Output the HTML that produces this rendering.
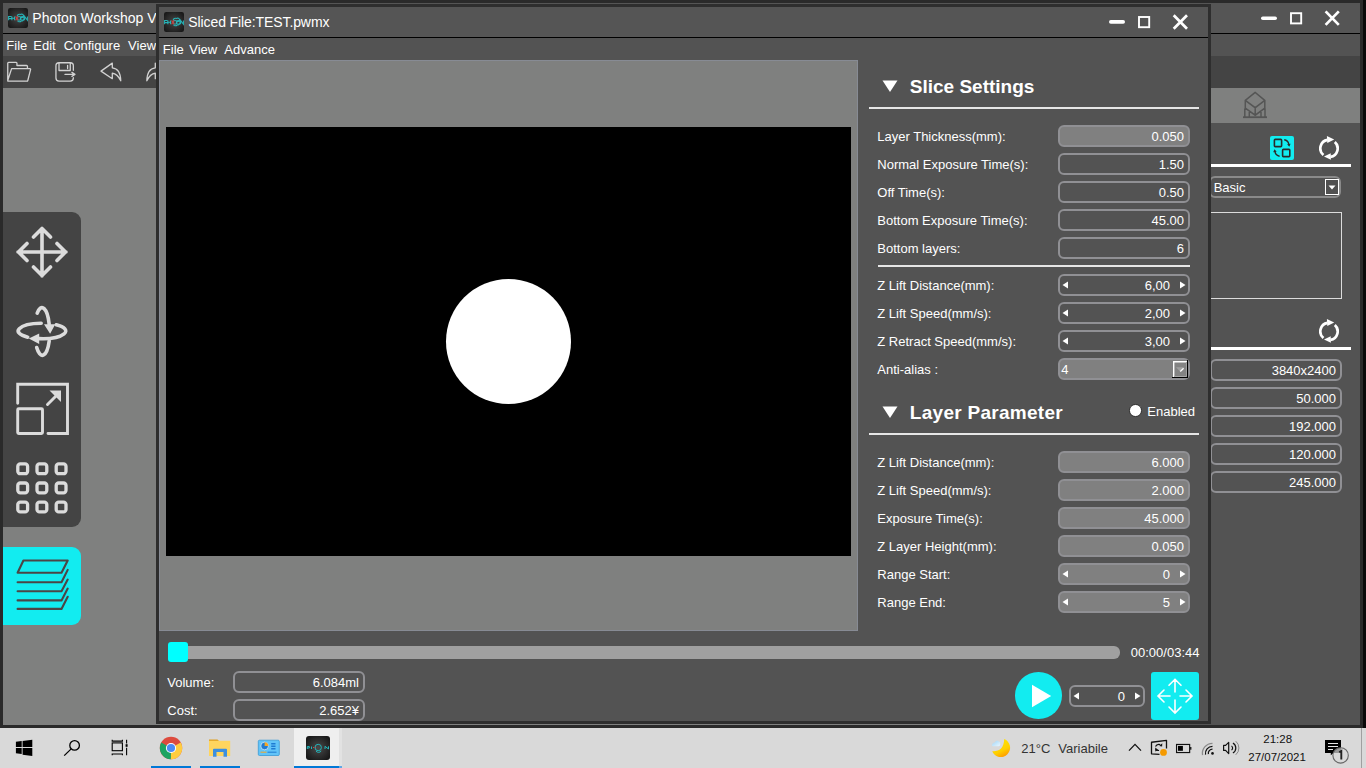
<!DOCTYPE html>
<html><head><meta charset="utf-8"><title>Photon Workshop</title>
<style>
html,body{margin:0;padding:0}
body{width:1366px;height:768px;overflow:hidden;position:relative;background:#2a2a2a;font-family:"Liberation Sans",sans-serif}
.a{position:absolute;display:block}
.t{position:absolute;white-space:pre;font-family:"Liberation Sans",sans-serif}
</style></head><body>
<div class="a" style="left:1363px;top:0px;width:3px;height:728px;background:#0a0a0a;"></div>
<div class="a" style="left:3px;top:3px;width:1357px;height:30px;background:#555555;"></div>
<div class="a" style="left:3px;top:33px;width:1357px;height:1px;background:#000;"></div>
<div class="a" style="left:3px;top:34px;width:1357px;height:22px;background:#535353;"></div>
<div class="a" style="left:3px;top:56px;width:1357px;height:32px;background:#444444;"></div>
<div class="a" style="left:3px;top:88px;width:1357px;height:637px;background:#7f807f;"></div>
<div class="a" style="left:1180px;top:123px;width:180px;height:602px;background:#535353;"></div>
<svg class="a" style="left:8px;top:8px;" width="20" height="20" viewBox="0 0 20 20"><defs><radialGradient id="lg8" cx="50%" cy="50%" r="62%"><stop offset="0" stop-color="#464646"/><stop offset="1" stop-color="#181818"/></radialGradient></defs>
<rect x="0" y="0" width="20" height="20" rx="2.2" fill="url(#lg8)"/>
<g fill="none" stroke="#27b4b8" stroke-width="1.05">
<path d="M0.6 12.2V8.4H2.8A1.1 1.1 0 0 1 2.8 10.6H0.6M3.9 8.4V12.2M6.6 8.4V12.2M3.9 10.3H6.6M16.6 12.2V8.4L19.4 12.2V8.4"/>
<circle cx="11" cy="10.3" r="1.9"/><path d="M9.2 8.2C9.3 6.4 11.3 5.9 12.6 6.4 13.6 5.8 15.4 6.1 15.6 7.8 15.5 9.2 14 9.8 12.8 9.2M9.6 12.6C10.2 14.2 12.3 14.2 13.2 12.9 14.1 13.4 15.3 12.8 15.4 11.6"/>
<circle cx="14.3" cy="10.4" r="1.8"/>
</g>
<path d="M7.6 8.4L10 12.2M10 8.4L7.6 12.2" stroke="#c8403f" stroke-width="1.1"/></svg>
<div class="t" style="left:32.3px;top:10px;line-height:16px;font-size:14px;font-weight:normal;color:#fff;">Photon Workshop V2.1.24</div>
<div class="t" style="left:6.3px;top:38px;line-height:15px;font-size:13px;font-weight:normal;color:#fff;">File</div>
<div class="t" style="left:33.3px;top:38px;line-height:15px;font-size:13px;font-weight:normal;color:#fff;">Edit</div>
<div class="t" style="left:63.8px;top:38px;line-height:15px;font-size:13px;font-weight:normal;color:#fff;">Configure</div>
<div class="t" style="left:128.10000000000002px;top:38px;line-height:15px;font-size:13px;font-weight:normal;color:#fff;">View</div>
<svg class="a" style="left:4px;top:60px;" width="30" height="26" viewBox="0 0 30 26"><path fill="none" stroke="#d2d2d2" stroke-width="1.3" stroke-linejoin="round" stroke-linecap="round" d="M3.75 21V3.3c0-.5.4-.9.9-.9h7.5c.5 0 .8.4.8.9v2.2h9.6c.5 0 .9.4.9.9v1.6M7.6 8.6h18.3c.5 0 .8.4.7.8l-2.8 11.1c-.1.4-.5.7-.9.7H4.6c-.5 0-.9-.4-.8-.9z"/></svg>
<svg class="a" style="left:52px;top:60px;" width="28" height="26" viewBox="0 0 28 26"><path fill="none" stroke="#d2d2d2" stroke-width="1.3" stroke-linejoin="round" stroke-linecap="round" d="M21.35 10.3V5.75c0-1.65-1.35-3-3-3H6.95c-1.65 0-3 1.35-3 3v12.3c0 1.65 1.35 3 3 3h11.4c1.65 0 3-1.35 3-3v-.3M7 2.75v7.75h11.25V2.75M15.6 5.3v3.3M13 14.4h9.9M19.9 12.4l3 2-3 2"/></svg>
<svg class="a" style="left:98px;top:60px;" width="26" height="26" viewBox="0 0 26 26"><path fill="none" stroke="#d2d2d2" stroke-width="1.3" stroke-linejoin="round" stroke-linecap="round" d="M3 11.15L14.3 3.15V7.8c5.2.5 8.3 5.5 8.45 13-2-4.3-4.6-7.2-8.45-7.55V18.7z"/></svg>
<svg class="a" style="left:144px;top:60px;" width="12" height="26" viewBox="0 0 12 26"><path fill="none" stroke="#d2d2d2" stroke-width="1.3" stroke-linejoin="round" stroke-linecap="round" d="M11.3 3.2V7.8c-5.2.5-8.3 5.5-8.45 13 2-4.3 4.6-7.2 8.45-7.55V18.7"/></svg>
<svg class="a" style="left:1240px;top:89px;" width="30" height="32" viewBox="0 0 30 32"><g fill="none" stroke="#555" stroke-width="1.5"><path d="M15.2 3.4L5.3 11.4V19.1L15.2 26.2 24.8 19.1V11.4ZM5.3 11.4L15.2 18.7 24.8 11.4M15.2 18.7V26.2M4.8 19.6V28.2M9.3 22.9V28.2M21 22.9V28.2M25 19.6V28.2"/><path d="M3 28.2H27" stroke-width="1.8"/></g></svg>
<div class="a" style="left:1270px;top:136px;width:24px;height:24px;background:#12ecf0;border-radius:2px"></div>
<svg class="a" style="left:1270px;top:136px;" width="24" height="24" viewBox="0 0 24 24"><g fill="none" stroke="#2a2a2a"><rect x="4.4" y="3.4" width="7.2" height="7.2" rx="0.8" stroke-width="1.6"/><rect x="12.6" y="13.4" width="7.2" height="7.2" rx="0.8" stroke-width="1.6"/><path d="M14.2 3.8c2.4.3 4.1 2 4.6 4.3M9.6 20.2c-2.4-.3-4.1-2-4.6-4.3" stroke-width="1.4"/></g><path d="M17.1 8.3L19.3 10.8 20.6 7.8Z M6.7 15.7L4.5 13.2 3.2 16.2Z" fill="#2a2a2a"/></svg>
<svg class="a" style="left:1319px;top:136px;" width="20" height="24" viewBox="0 0 20 24"><g fill="none" stroke="#fff" stroke-width="2.7"><path d="M8.5 3.88A8.65 8.65 0 0 0 4.44 19.03"/><path d="M15.79 5.97A8.65 8.65 0 0 1 11.5 20.92"/></g><path d="M7.9 0L15.2 3.5 8.3 7Z M11.7 17.25L5 20.4 11.9 23.7Z" fill="#fff"/></svg>
<div class="a" style="left:1211px;top:164px;width:140px;height:3px;background:#fff;"></div>
<div class="a" style="left:1209px;top:176px;width:128px;height:18px;border:2px solid #8a8a8a;border-radius:6px;background:#525252"></div>
<div class="a" style="left:1325px;top:179px;width:14px;height:16px;background:#505050;border:1px solid #fff;box-sizing:border-box"></div>
<svg class="a" style="left:1325px;top:179px;" width="14" height="16" viewBox="0 0 14 16"><path d="M3.5 6.5h7L7 10.5z" fill="#fff"/></svg>
<div class="t" style="left:1213.7px;top:180px;line-height:15px;font-size:13px;font-weight:normal;color:#fff;">Basic</div>
<div class="a" style="left:1200px;top:212px;width:141px;height:85px;border:1px solid #dcdcdc;border-left:none"></div>
<svg class="a" style="left:1319px;top:319px;" width="20" height="24" viewBox="0 0 20 24"><g fill="none" stroke="#fff" stroke-width="2.7"><path d="M8.5 3.88A8.65 8.65 0 0 0 4.44 19.03"/><path d="M15.79 5.97A8.65 8.65 0 0 1 11.5 20.92"/></g><path d="M7.9 0L15.2 3.5 8.3 7Z M11.7 17.25L5 20.4 11.9 23.7Z" fill="#fff"/></svg>
<div class="a" style="left:1211px;top:347px;width:140px;height:3px;background:#fff;"></div>
<div class="a" style="left:1210px;top:359px;width:128px;height:18px;border:2px solid #909094;border-radius:6px;background:transparent"></div>
<div class="t" style="left:1036px;width:300px;text-align:right;top:363px;line-height:15px;font-size:13px;font-weight:normal;color:#fff;">3840x2400</div>
<div class="a" style="left:1210px;top:387px;width:128px;height:18px;border:2px solid #909094;border-radius:6px;background:transparent"></div>
<div class="t" style="left:1036px;width:300px;text-align:right;top:391px;line-height:15px;font-size:13px;font-weight:normal;color:#fff;">50.000</div>
<div class="a" style="left:1210px;top:415px;width:128px;height:18px;border:2px solid #909094;border-radius:6px;background:transparent"></div>
<div class="t" style="left:1036px;width:300px;text-align:right;top:419px;line-height:15px;font-size:13px;font-weight:normal;color:#fff;">192.000</div>
<div class="a" style="left:1210px;top:443px;width:128px;height:18px;border:2px solid #909094;border-radius:6px;background:transparent"></div>
<div class="t" style="left:1036px;width:300px;text-align:right;top:447px;line-height:15px;font-size:13px;font-weight:normal;color:#fff;">120.000</div>
<div class="a" style="left:1210px;top:471px;width:128px;height:18px;border:2px solid #909094;border-radius:6px;background:transparent"></div>
<div class="t" style="left:1036px;width:300px;text-align:right;top:475px;line-height:15px;font-size:13px;font-weight:normal;color:#fff;">245.000</div>
<div class="a" style="left:3px;top:212px;width:78px;height:315px;background:#444444;border-radius:0 9px 9px 0"></div>
<svg class="a" style="left:10px;top:220px;" width="64" height="64" viewBox="0 0 64 64"><path fill="none" stroke="#dcdcdc" stroke-width="3.6" stroke-linecap="round" stroke-linejoin="round" d="M32 8.5V56M8 32H56M23.5 17L32 8.5 40.5 17M23.5 47L32 55.5 40.5 47M17 23.5L8.5 32 17 40.5M47 23.5L55.5 32 47 40.5"/></svg>
<svg class="a" style="left:10px;top:299px;" width="64" height="64" viewBox="0 0 64 64"><g fill="none" stroke="#dcdcdc" stroke-width="3.6" stroke-linecap="round"><path d="M31.17 24.3A23.8 7.7 0 0 0 17.7 38.15"/><path d="M46.3 25.85A23.8 7.7 0 0 1 29.1 39.64"/><path d="M27.2 14.07A7.5 23.4 0 0 1 39.17 25.16"/><path d="M39.2 41.9A7.5 23.4 0 0 1 26.7 48.5"/></g><path d="M34 25.3L45.3 25.3 40.1 34.8Z M29.2 34.4L29.2 45 18.8 39.4Z" fill="#dcdcdc"/></svg>
<svg class="a" style="left:10px;top:377px;" width="64" height="64" viewBox="0 0 64 64"><g fill="none" stroke="#dcdcdc" stroke-width="2.9" stroke-linecap="round"><path d="M7.7 26.3V7.3H57.5V56.5H38"/><rect x="7.7" y="31.7" width="24.8" height="24.8" rx="1"/><path d="M37.5 27.5L49 16"/></g><path d="M39.5 13.5H51V25Z" fill="#dcdcdc"/></svg>
<svg class="a" style="left:10px;top:456px;" width="64" height="64" viewBox="0 0 64 64"><g fill="none" stroke="#dcdcdc" stroke-width="3.3"><rect x="7.8" y="7.9" width="9.8" height="9.8" rx="2.5"/><rect x="27.0" y="7.9" width="9.8" height="9.8" rx="2.5"/><rect x="46.199999999999996" y="7.9" width="9.8" height="9.8" rx="2.5"/><rect x="7.8" y="27.0" width="9.8" height="9.8" rx="2.5"/><rect x="27.0" y="27.0" width="9.8" height="9.8" rx="2.5"/><rect x="46.199999999999996" y="27.0" width="9.8" height="9.8" rx="2.5"/><rect x="7.8" y="46.1" width="9.8" height="9.8" rx="2.5"/><rect x="27.0" y="46.1" width="9.8" height="9.8" rx="2.5"/><rect x="46.199999999999996" y="46.1" width="9.8" height="9.8" rx="2.5"/></g></svg>
<div class="a" style="left:3px;top:547px;width:78px;height:78px;background:#12ecf0;border-radius:0 9px 9px 0"></div>
<svg class="a" style="left:3px;top:547px;" width="78" height="78" viewBox="0 0 78 78"><g fill="none" stroke="#4b4646" stroke-width="2.1" stroke-linecap="round" stroke-linejoin="round"><path d="M14.6 25.8L20.4 13.5H64.7L58.5 25.8Z"/><path d="M14.6 35.2H58.5L64.7 22.9M14.6 44.2H58.5L64.7 32.6M14.6 53.4H58.5L64.7 41.6M14.6 61.9H58.5L64.7 49.8"/></g></svg>
<div class="a" style="left:156px;top:4px;width:1055px;height:720px;background:#2e2e2e;"></div>
<div class="a" style="left:159px;top:7px;width:1049px;height:30px;background:#555555;"></div>
<div class="a" style="left:159px;top:37px;width:1049px;height:1px;background:#000;"></div>
<div class="a" style="left:159px;top:38px;width:1049px;height:683px;background:#535353;"></div>
<div class="a" style="left:159px;top:60px;width:699px;height:571px;background:#878b94;"></div>
<div class="a" style="left:160px;top:61px;width:697px;height:569px;background:#7f807f;"></div>
<div class="a" style="left:166px;top:127px;width:685px;height:429px;background:#000;"></div>
<div class="a" style="left:446px;top:278.75px;width:125px;height:125px;border-radius:50%;background:#fff"></div>
<svg class="a" style="left:164px;top:12px;" width="20" height="20" viewBox="0 0 20 20"><defs><radialGradient id="lg164" cx="50%" cy="50%" r="62%"><stop offset="0" stop-color="#464646"/><stop offset="1" stop-color="#181818"/></radialGradient></defs>
<rect x="0" y="0" width="20" height="20" rx="2.2" fill="url(#lg164)"/>
<g fill="none" stroke="#27b4b8" stroke-width="1.05">
<path d="M0.6 12.2V8.4H2.8A1.1 1.1 0 0 1 2.8 10.6H0.6M3.9 8.4V12.2M6.6 8.4V12.2M3.9 10.3H6.6M16.6 12.2V8.4L19.4 12.2V8.4"/>
<circle cx="11" cy="10.3" r="1.9"/><path d="M9.2 8.2C9.3 6.4 11.3 5.9 12.6 6.4 13.6 5.8 15.4 6.1 15.6 7.8 15.5 9.2 14 9.8 12.8 9.2M9.6 12.6C10.2 14.2 12.3 14.2 13.2 12.9 14.1 13.4 15.3 12.8 15.4 11.6"/>
<circle cx="14.3" cy="10.4" r="1.8"/>
</g>
<path d="M7.6 8.4L10 12.2M10 8.4L7.6 12.2" stroke="#c8403f" stroke-width="1.1"/></svg>
<div class="t" style="left:188.3px;top:14px;line-height:16px;font-size:14px;font-weight:normal;color:#fff;letter-spacing:-0.1px">Sliced File:TEST.pwmx</div>
<div class="t" style="left:162.8px;top:42px;line-height:15px;font-size:13px;font-weight:normal;color:#fff;">File</div>
<div class="t" style="left:189.3px;top:42px;line-height:15px;font-size:13px;font-weight:normal;color:#fff;">View</div>
<div class="t" style="left:224.3px;top:42px;line-height:15px;font-size:13px;font-weight:normal;color:#fff;">Advance</div>
<svg class="a" style="left:1105px;top:10px;" width="90" height="24" viewBox="0 0 90 24"><path d="M5.8 11.9H18.2" stroke="#fff" stroke-width="3.6" stroke-linecap="round"/><rect x="34" y="7" width="10.2" height="10.2" fill="none" stroke="#fff" stroke-width="1.9"/><path d="M68.7 5.2L82 18.8M82 5.2L68.7 18.8" stroke="#fff" stroke-width="2.7"/></svg>
<svg class="a" style="left:1257px;top:6px;" width="90" height="24" viewBox="0 0 90 24"><path d="M5.8 12.3H18.2" stroke="#fff" stroke-width="3.6" stroke-linecap="round"/><rect x="34" y="7.2" width="10.2" height="10.2" fill="none" stroke="#fff" stroke-width="1.9"/><path d="M68.6 5.4L81.8 18.9M81.8 5.4L68.6 18.9" stroke="#fff" stroke-width="2.7"/></svg>
<svg class="a" style="left:882px;top:80px;" width="16" height="12" viewBox="0 0 16 12"><path d="M0.5 0.5H15.5L8 12Z" fill="#fff"/></svg>
<div class="t" style="left:909.8px;top:76px;line-height:21px;font-size:19px;font-weight:bold;color:#fff;">Slice Settings</div>
<div class="a" style="left:869px;top:107px;width:330px;height:2px;background:#e6e6e6;"></div>
<div class="t" style="left:877.3px;top:129px;line-height:15px;font-size:13px;font-weight:normal;color:#fff;">Layer Thickness(mm):</div>
<div class="a" style="left:1058px;top:125px;width:128px;height:18px;border:2px solid #909094;border-radius:6px;background:#808080"></div>
<div class="t" style="left:884px;width:300px;text-align:right;top:129px;line-height:15px;font-size:13px;font-weight:normal;color:#fff;">0.050</div>
<div class="t" style="left:877.3px;top:157px;line-height:15px;font-size:13px;font-weight:normal;color:#fff;">Normal Exposure Time(s):</div>
<div class="a" style="left:1058px;top:153px;width:128px;height:18px;border:2px solid #909094;border-radius:6px;background:transparent"></div>
<div class="t" style="left:884px;width:300px;text-align:right;top:157px;line-height:15px;font-size:13px;font-weight:normal;color:#fff;">1.50</div>
<div class="t" style="left:877.3px;top:185px;line-height:15px;font-size:13px;font-weight:normal;color:#fff;">Off Time(s):</div>
<div class="a" style="left:1058px;top:181px;width:128px;height:18px;border:2px solid #909094;border-radius:6px;background:transparent"></div>
<div class="t" style="left:884px;width:300px;text-align:right;top:185px;line-height:15px;font-size:13px;font-weight:normal;color:#fff;">0.50</div>
<div class="t" style="left:877.3px;top:213px;line-height:15px;font-size:13px;font-weight:normal;color:#fff;">Bottom Exposure Time(s):</div>
<div class="a" style="left:1058px;top:209px;width:128px;height:18px;border:2px solid #909094;border-radius:6px;background:transparent"></div>
<div class="t" style="left:884px;width:300px;text-align:right;top:213px;line-height:15px;font-size:13px;font-weight:normal;color:#fff;">45.00</div>
<div class="t" style="left:877.3px;top:241px;line-height:15px;font-size:13px;font-weight:normal;color:#fff;">Bottom layers:</div>
<div class="a" style="left:1058px;top:237px;width:128px;height:18px;border:2px solid #909094;border-radius:6px;background:transparent"></div>
<div class="t" style="left:884px;width:300px;text-align:right;top:241px;line-height:15px;font-size:13px;font-weight:normal;color:#fff;">6</div>
<div class="a" style="left:878px;top:265px;width:312px;height:2px;background:#e6e6e6;"></div>
<div class="t" style="left:877.3px;top:278px;line-height:15px;font-size:13px;font-weight:normal;color:#fff;">Z Lift Distance(mm):</div>
<div class="a" style="left:1058px;top:274px;width:128px;height:18px;border:2px solid #909094;border-radius:6px;background:transparent"></div>
<svg class="a" style="left:1058px;top:274px;" width="132" height="22" viewBox="0 0 132 22"><path d="M4.5 11.0 L10 7.5 L10 14.5Z" fill="#fff"/><path d="M127.5 11.0 L122 7.5 L122 14.5Z" fill="#fff"/></svg>
<div class="t" style="left:870px;width:300px;text-align:right;top:278px;line-height:15px;font-size:13px;font-weight:normal;color:#fff;">6,00</div>
<div class="t" style="left:877.3px;top:306px;line-height:15px;font-size:13px;font-weight:normal;color:#fff;">Z Lift Speed(mm/s):</div>
<div class="a" style="left:1058px;top:302px;width:128px;height:18px;border:2px solid #909094;border-radius:6px;background:transparent"></div>
<svg class="a" style="left:1058px;top:302px;" width="132" height="22" viewBox="0 0 132 22"><path d="M4.5 11.0 L10 7.5 L10 14.5Z" fill="#fff"/><path d="M127.5 11.0 L122 7.5 L122 14.5Z" fill="#fff"/></svg>
<div class="t" style="left:870px;width:300px;text-align:right;top:306px;line-height:15px;font-size:13px;font-weight:normal;color:#fff;">2,00</div>
<div class="t" style="left:877.3px;top:334px;line-height:15px;font-size:13px;font-weight:normal;color:#fff;">Z Retract Speed(mm/s):</div>
<div class="a" style="left:1058px;top:330px;width:128px;height:18px;border:2px solid #909094;border-radius:6px;background:transparent"></div>
<svg class="a" style="left:1058px;top:330px;" width="132" height="22" viewBox="0 0 132 22"><path d="M4.5 11.0 L10 7.5 L10 14.5Z" fill="#fff"/><path d="M127.5 11.0 L122 7.5 L122 14.5Z" fill="#fff"/></svg>
<div class="t" style="left:870px;width:300px;text-align:right;top:334px;line-height:15px;font-size:13px;font-weight:normal;color:#fff;">3,00</div>
<div class="t" style="left:877.3px;top:362px;line-height:15px;font-size:13px;font-weight:normal;color:#fff;">Anti-alias :</div>
<div class="a" style="left:1058px;top:358px;width:128px;height:18px;border:2px solid #909094;border-radius:6px;background:#808080"></div>
<div class="t" style="left:1061.3px;top:362px;line-height:15px;font-size:13px;font-weight:normal;color:#fff;">4</div>
<svg class="a" style="left:1170px;top:358px;" width="20" height="22" viewBox="0 0 20 22"><rect x="3" y="3" width="14" height="16" fill="#838383"/><path d="M3.7 19V3.7H17" stroke="#fff" stroke-width="1.4" fill="none"/><path d="M16.5 4V18.5H4" stroke="#a8a8a8" stroke-width="1" fill="none"/><path d="M17.5 2V19.5H2" stroke="#000" stroke-width="1.1" fill="none"/><path d="M6 9.3H13.8L10.3 13.8Z" fill="#a0a0a0"/><path d="M10.3 13.5L13.6 10.2" stroke="#fff" stroke-width="1.3"/></svg>
<svg class="a" style="left:882px;top:406px;" width="16" height="12" viewBox="0 0 16 12"><path d="M0.5 0.5H15.5L8 12Z" fill="#fff"/></svg>
<div class="t" style="left:909.8px;top:402px;line-height:21px;font-size:19px;font-weight:bold;color:#fff;letter-spacing:0.28px">Layer Parameter</div>
<div class="a" style="left:1129.3px;top:404.2px;width:10.4px;height:10.4px;border:1px solid #2e2e2e;border-radius:50%;background:#fff"></div>
<div class="t" style="left:1147.3px;top:404px;line-height:15px;font-size:13px;font-weight:normal;color:#fff;">Enabled</div>
<div class="a" style="left:869px;top:433px;width:330px;height:2px;background:#e6e6e6;"></div>
<div class="t" style="left:877.3px;top:455px;line-height:15px;font-size:13px;font-weight:normal;color:#fff;">Z Lift Distance(mm):</div>
<div class="a" style="left:1058px;top:451px;width:128px;height:18px;border:2px solid #909094;border-radius:6px;background:#808080"></div>
<div class="t" style="left:884px;width:300px;text-align:right;top:455px;line-height:15px;font-size:13px;font-weight:normal;color:#fff;">6.000</div>
<div class="t" style="left:877.3px;top:483px;line-height:15px;font-size:13px;font-weight:normal;color:#fff;">Z Lift Speed(mm/s):</div>
<div class="a" style="left:1058px;top:479px;width:128px;height:18px;border:2px solid #909094;border-radius:6px;background:#808080"></div>
<div class="t" style="left:884px;width:300px;text-align:right;top:483px;line-height:15px;font-size:13px;font-weight:normal;color:#fff;">2.000</div>
<div class="t" style="left:877.3px;top:511px;line-height:15px;font-size:13px;font-weight:normal;color:#fff;">Exposure Time(s):</div>
<div class="a" style="left:1058px;top:507px;width:128px;height:18px;border:2px solid #909094;border-radius:6px;background:#808080"></div>
<div class="t" style="left:884px;width:300px;text-align:right;top:511px;line-height:15px;font-size:13px;font-weight:normal;color:#fff;">45.000</div>
<div class="t" style="left:877.3px;top:539px;line-height:15px;font-size:13px;font-weight:normal;color:#fff;">Z Layer Height(mm):</div>
<div class="a" style="left:1058px;top:535px;width:128px;height:18px;border:2px solid #909094;border-radius:6px;background:#808080"></div>
<div class="t" style="left:884px;width:300px;text-align:right;top:539px;line-height:15px;font-size:13px;font-weight:normal;color:#fff;">0.050</div>
<div class="t" style="left:877.3px;top:567px;line-height:15px;font-size:13px;font-weight:normal;color:#fff;">Range Start:</div>
<div class="a" style="left:1058px;top:563px;width:128px;height:18px;border:2px solid #909094;border-radius:6px;background:#808080"></div>
<svg class="a" style="left:1058px;top:563px;" width="132" height="22" viewBox="0 0 132 22"><path d="M4.5 11.0 L10 7.5 L10 14.5Z" fill="#fff"/><path d="M127.5 11.0 L122 7.5 L122 14.5Z" fill="#fff"/></svg>
<div class="t" style="left:870px;width:300px;text-align:right;top:567px;line-height:15px;font-size:13px;font-weight:normal;color:#fff;">0</div>
<div class="t" style="left:877.3px;top:595px;line-height:15px;font-size:13px;font-weight:normal;color:#fff;">Range End:</div>
<div class="a" style="left:1058px;top:591px;width:128px;height:18px;border:2px solid #909094;border-radius:6px;background:#808080"></div>
<svg class="a" style="left:1058px;top:591px;" width="132" height="22" viewBox="0 0 132 22"><path d="M4.5 11.0 L10 7.5 L10 14.5Z" fill="#fff"/><path d="M127.5 11.0 L122 7.5 L122 14.5Z" fill="#fff"/></svg>
<div class="t" style="left:870px;width:300px;text-align:right;top:595px;line-height:15px;font-size:13px;font-weight:normal;color:#fff;">5</div>
<div class="a" style="left:175px;top:646px;width:945px;height:13px;background:#a0a0a0;border-radius:0 6px 6px 0"></div>
<div class="a" style="left:168px;top:642px;width:20px;height:20px;background:#00ffff;border-radius:3px"></div>
<div class="t" style="left:1130.8px;top:645px;line-height:15px;font-size:13px;font-weight:normal;color:#fff;">00:00/03:44</div>
<div class="t" style="left:167.3px;top:675px;line-height:15px;font-size:13px;font-weight:normal;color:#fff;">Volume:</div>
<div class="t" style="left:167.3px;top:703px;line-height:15px;font-size:13px;font-weight:normal;color:#fff;">Cost:</div>
<div class="a" style="left:233px;top:671px;width:128px;height:18px;border:2px solid #909094;border-radius:6px;background:transparent"></div>
<div class="a" style="left:233px;top:699px;width:128px;height:18px;border:2px solid #909094;border-radius:6px;background:transparent"></div>
<div class="t" style="left:59px;width:300px;text-align:right;top:675px;line-height:15px;font-size:13px;font-weight:normal;color:#fff;">6.084ml</div>
<div class="t" style="left:59px;width:300px;text-align:right;top:703px;line-height:15px;font-size:13px;font-weight:normal;color:#fff;">2.652¥</div>
<div class="a" style="left:1015.3px;top:672.2px;width:46.7px;height:46.7px;border-radius:50%;background:#12ecf0"></div>
<svg class="a" style="left:1015px;top:672px;" width="48" height="48" viewBox="0 0 48 48"><path d="M17 12.8V35.2L36.2 24Z" fill="#fff"/></svg>
<div class="a" style="left:1069px;top:685px;width:72px;height:18px;border:2px solid #909094;border-radius:6px;background:transparent"></div>
<svg class="a" style="left:1069px;top:685px;" width="76" height="22" viewBox="0 0 76 22"><path d="M4.5 11.0 L10 7.5 L10 14.5Z" fill="#fff"/><path d="M71.5 11.0 L66 7.5 L66 14.5Z" fill="#fff"/></svg>
<div class="t" style="left:825px;width:300px;text-align:right;top:689px;line-height:15px;font-size:13px;font-weight:normal;color:#fff;">0</div>
<div class="a" style="left:1151px;top:672px;width:48px;height:48px;background:#12ecf0;border-radius:3px"></div>
<svg class="a" style="left:1151px;top:672px;" width="48" height="48" viewBox="0 0 48 48"><g fill="none" stroke="#fff" stroke-width="1.6" stroke-linecap="round"><path d="M24 7.3V20M24 28V41M7 24H19M29 24H41M18 13.3L24 7.3 30 13.3M18 35L24 41 30 35M13 18L7 24 13 30M35 18L41 24 35 30"/></g></svg>
<div class="a" style="left:0px;top:728px;width:1366px;height:40px;background:#d9d9d9;"></div>
<div class="a" style="left:294px;top:728px;width:45px;height:40px;background:#efefef;"></div>
<div class="a" style="left:339px;top:728px;width:3px;height:40px;background:#e2e2e2;"></div>
<div class="a" style="left:1361px;top:728px;width:1px;height:40px;background:#a0a0a0;"></div>
<div class="a" style="left:151px;top:766px;width:40px;height:2px;background:#0078d7;"></div>
<div class="a" style="left:200px;top:766px;width:40px;height:2px;background:#0078d7;"></div>
<div class="a" style="left:294px;top:766px;width:45px;height:2px;background:#0078d7;"></div>
<div class="a" style="left:339px;top:766px;width:3px;height:2px;background:#5fa8e6;"></div>
<svg class="a" style="left:15px;top:739px;" width="18" height="18" viewBox="0 0 18 18"><path d="M0.9 2.8L6.7 2.0V8H0.9Z M7.6 1.9L17.3 0.8V8H7.6Z M0.9 9H6.7V15L0.9 14.2Z M7.6 9H17.3V17L7.6 15.8Z" fill="#000"/></svg>
<svg class="a" style="left:62px;top:738px;" width="20" height="20" viewBox="0 0 20 20"><circle cx="12.6" cy="7.4" r="4.8" fill="none" stroke="#000" stroke-width="1.3"/><path d="M9.2 10.9L2.2 17.6" stroke="#000" stroke-width="1.3"/></svg>
<svg class="a" style="left:110px;top:738px;" width="20" height="20" viewBox="0 0 20 20"><g fill="none" stroke="#000" stroke-width="1.1"><path d="M2.2 1.8V3.1H12.4V1.8M2.2 17.3V16H12.4V17.3"/><rect x="2.2" y="4.9" width="10.2" height="7.8"/><path d="M16.6 1.8V5.4M16.6 9.8V17.2"/></g><rect x="15.6" y="6.2" width="2" height="2.6" fill="#000"/></svg>
<svg class="a" style="left:159px;top:736px;" width="24" height="24" viewBox="0 0 24 24"><circle cx="12" cy="12" r="11.2" fill="#dd4b3e"/><path d="M12 12 L2.3 6.4 A11.2 11.2 0 0 0 11.9 23.2 Z" fill="#1da462"/><path d="M12 12 L11.9 23.2 A11.2 11.2 0 0 0 21.7 6.4 Z" fill="#ffcd40"/><circle cx="12" cy="12" r="5.1" fill="#fff"/><circle cx="12" cy="12" r="4.1" fill="#4c8bf5"/></svg>
<svg class="a" style="left:208px;top:738px;" width="24" height="20" viewBox="0 0 24 20"><path d="M1 1.5H9.5L11 3H1Z" fill="#e0a020"/><rect x="1" y="2.8" width="21.2" height="15.2" fill="#ffd55e"/><path d="M5 18.8V11.8A1 1 0 0 1 6 10.8H18A1 1 0 0 1 19 11.8V18.8H15.5V14H8.5V18.8Z" fill="#3c8fe0"/></svg>
<svg class="a" style="left:257px;top:739px;" width="24" height="18" viewBox="0 0 24 18"><rect x="1.3" y="1.2" width="21" height="15.3" rx="1.2" fill="#62c4f8" stroke="#3a9ad6" stroke-width="0.8"/><circle cx="7.6" cy="7" r="3.8" fill="#1f7bd1" stroke="#fff" stroke-width="0.6"/><path d="M7.6 7V3.2A3.8 3.8 0 0 1 11.4 7Z" fill="#f5a623"/><path d="M14.2 4.8H18.5M14.2 7.3H18.5M14.2 9.8H18.5" stroke="#1f7bd1" stroke-width="1.4"/><path d="M3.5 13.2H9.5" stroke="#f5a623" stroke-width="1"/><path d="M10.5 13.2H19.5" stroke="#1f7bd1" stroke-width="1"/></svg>
<svg class="a" style="left:306px;top:736px;" width="24" height="24" viewBox="0 0 24 24"><defs><radialGradient id="tbg" cx="50%" cy="50%" r="65%"><stop offset="0" stop-color="#4a4a4a"/><stop offset="1" stop-color="#151515"/></radialGradient></defs><rect x="0" y="0" width="24" height="24" rx="3" fill="url(#tbg)"/><g fill="none" stroke="#22b5bb" stroke-width="1"><path d="M1.3 13V10.5H3.3V12H1.3M5.5 10.5V13M19 13V10.3L22.5 13V10.3"/><circle cx="12.2" cy="11.5" r="3.2"/><path d="M10 15.2c1.5 1.6 3.8 1.6 5.2-.2"/></g><path d="M7 11.5H11" stroke="#c84a4a" stroke-width="1.2" stroke-dasharray="1 1"/></svg>
<svg class="a" style="left:990px;top:738px;" width="22" height="20" viewBox="0 0 22 20"><defs><linearGradient id="mg" x1="0.3" y1="0.2" x2="0.7" y2="1"><stop offset="0" stop-color="#ffe000"/><stop offset="0.55" stop-color="#ffd000"/><stop offset="1" stop-color="#ff9800"/></linearGradient><linearGradient id="cg" x1="0" y1="0" x2="1" y2="1"><stop offset="0" stop-color="#9fd4f5"/><stop offset="1" stop-color="#e8f6ff"/></linearGradient></defs><path d="M14.2 1.1A9.3 9.3 0 1 1 2.2 13.3C9 13.8 14 10.5 14.2 1.1Z" fill="url(#mg)"/><path d="M2 7.8C1.8 6 3.3 4.5 4.8 4.4 5.5 2.8 7.3 2.3 8.4 3.2 9.6 3.3 10.4 4.5 10.2 6 10.5 7.4 9.6 8.2 8.6 8.2H3.2C2.5 8.2 2 8.1 2 7.8Z" fill="url(#cg)"/></svg>
<div class="t" style="left:1021.3px;top:741px;line-height:15px;font-size:13px;font-weight:normal;color:#333;">21°C</div>
<div class="t" style="left:1058.3px;top:741px;line-height:15px;font-size:13px;font-weight:normal;color:#333;">Variabile</div>
<svg class="a" style="left:1126px;top:741px;" width="18" height="12" viewBox="0 0 18 12"><path d="M3 9.6L9 3.4 15 9.6" fill="none" stroke="#111" stroke-width="1.3"/></svg>
<svg class="a" style="left:1149px;top:738px;" width="20" height="20" viewBox="0 0 20 20"><path d="M10.5 16.4L2.5 15.8V4.25L17.5 2.4V10.5" fill="none" stroke="#111" stroke-width="1.3" stroke-linejoin="round"/><path d="M6.5 8.6C7.3 6.7 9.3 6.1 11.3 6.6M10 12.4C8.6 12.7 7.3 12.2 6.9 11" fill="none" stroke="#111" stroke-width="1.2"/><path d="M10.2 8L13.3 5.3 13.1 8.6Z M6.2 9.6L6.3 13.4 9.3 11.9Z" fill="#111"/><circle cx="14.5" cy="14.4" r="3.4" fill="#f59a00"/></svg>
<svg class="a" style="left:1174px;top:742px;" width="20" height="13" viewBox="0 0 20 13"><rect x="2.55" y="2.45" width="13.1" height="8.1" fill="none" stroke="#111" stroke-width="1.15"/><rect x="4" y="3.9" width="4.9" height="4.9" fill="#000"/><rect x="16.1" y="5" width="1.3" height="2.7" fill="#111"/></svg>
<svg class="a" style="left:1200px;top:740px;" width="18" height="18" viewBox="0 0 18 18"><g fill="none" stroke-width="1.25"><path d="M8.36 14.13A4.2 4.2 0 0 1 12.5 9.2" stroke="#111"/><path d="M5.51 14.63A7.1 7.1 0 0 1 12.5 6.3" stroke="#111"/><path d="M2.55 15.15A10.1 10.1 0 0 1 12.5 3.3" stroke="#8a8a8a"/></g><circle cx="12.5" cy="13.4" r="1.3" fill="#111"/></svg>
<svg class="a" style="left:1220px;top:739px;" width="22" height="18" viewBox="0 0 22 18"><path d="M3.6 6.4H5.6L8.7 3.4V14.6L5.6 11.4H3.6Z" fill="none" stroke="#111" stroke-width="1.2" stroke-linejoin="round"/><path d="M11.49 6.87A2.6 2.6 0 0 1 11.49 11.13M12.9 3.98A5.8 5.8 0 0 1 12.9 14.02" fill="none" stroke="#111" stroke-width="1.2"/><path d="M15.72 2.18A8.9 8.9 0 0 1 15.72 15.82" fill="none" stroke="#8a8a8a" stroke-width="1"/></svg>
<div class="t" style="left:1263.3px;top:733px;line-height:12px;font-size:11.5px;font-weight:normal;color:#111;">21:28</div>
<div class="t" style="left:1248.3px;top:751px;line-height:12px;font-size:11.5px;font-weight:normal;color:#111;">27/07/2021</div>
<svg class="a" style="left:1322px;top:737px;" width="30" height="30" viewBox="0 0 30 30"><path d="M3 3H19V15.9H11.5L8.8 18.3V15.9H3Z" fill="#000"/><path d="M6 6.5H16M6 9.5H16M6 12.5H11" stroke="#fff" stroke-width="0.9"/><circle cx="18.6" cy="18.4" r="7.7" fill="#d9d9d9" fill-opacity="0.7" stroke="#666" stroke-width="1.1"/><path d="M17.2 15.3L19.3 14V22.6" fill="none" stroke="#222" stroke-width="1.9"/></svg>
</body></html>
